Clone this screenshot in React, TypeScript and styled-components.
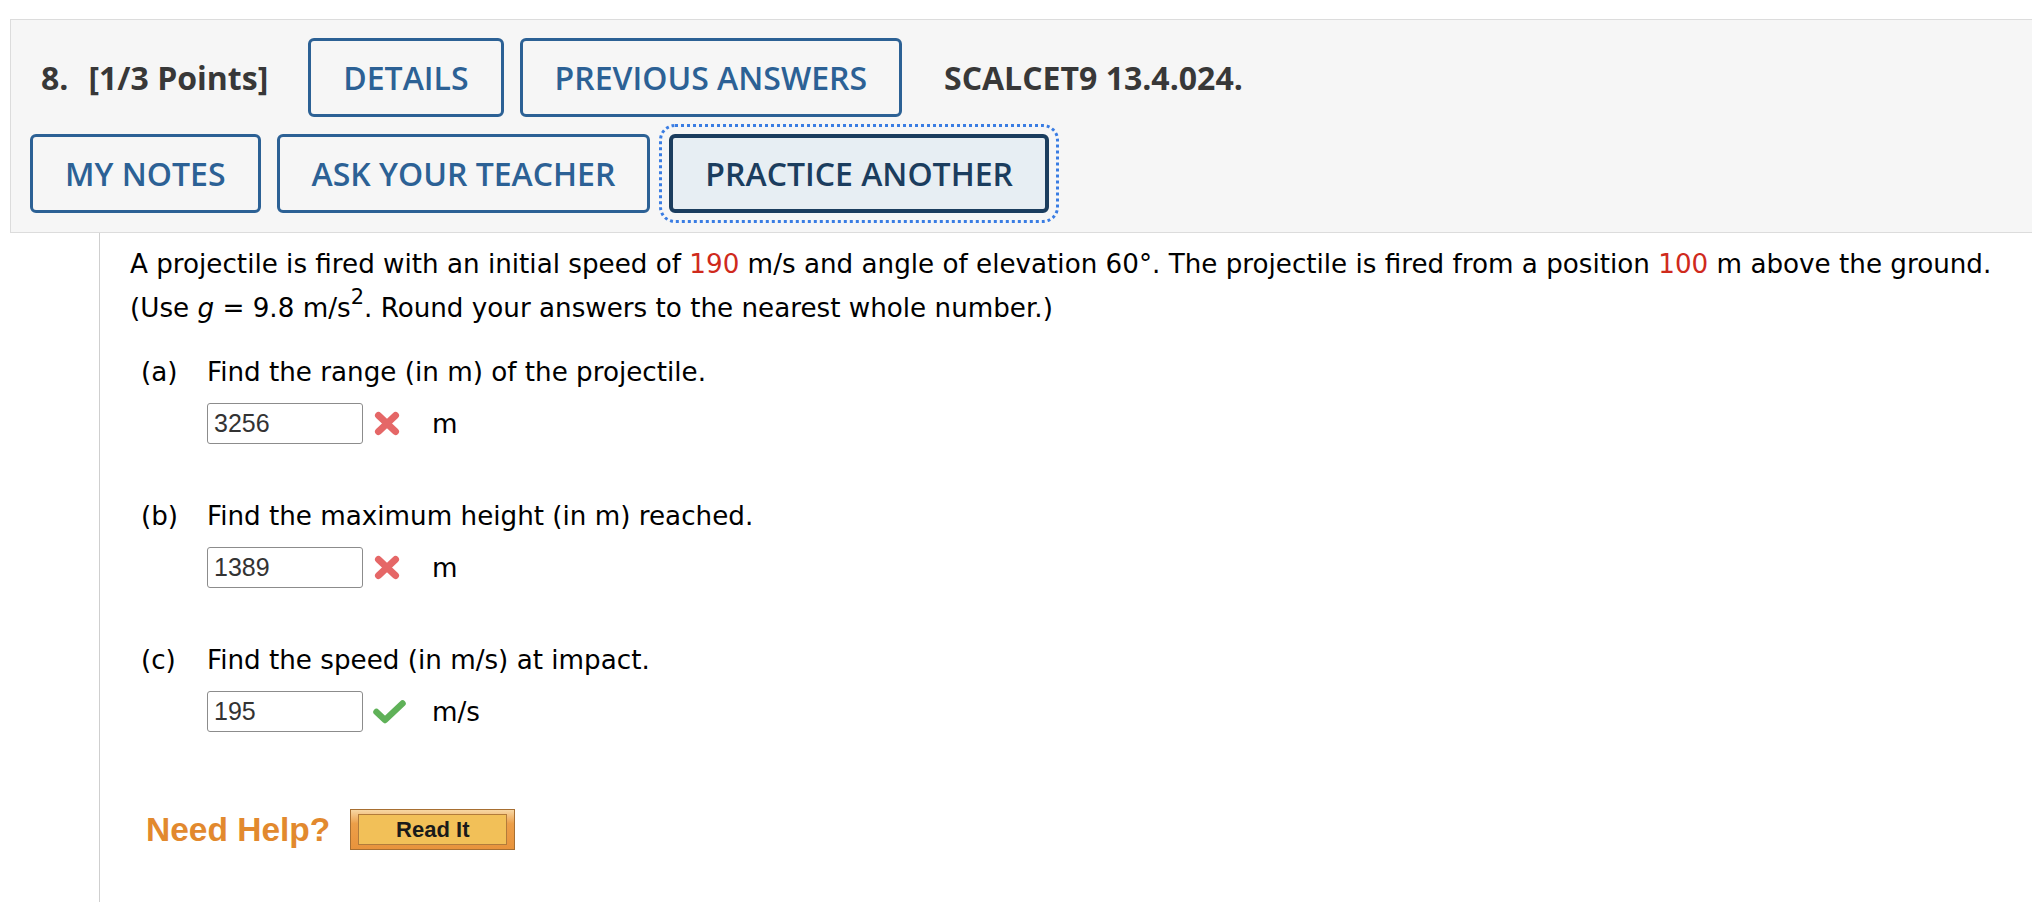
import React from "react";
import styled, { createGlobalStyle, css } from "styled-components";

const GlobalStyle = createGlobalStyle`
  html, body {
    margin: 0;
    padding: 0;
    background: #ffffff;
    overflow: hidden;
  }
  body {
    font-family: "DejaVu Sans", Verdana, sans-serif;
    color: #000;
  }
`;

const Page = styled.div`
  padding: 19px 0 0 10px;
  min-height: 883px;
  display: flex;
  flex-direction: column;
`;

const HeaderPanel = styled.div`
  background: #f6f6f6;
  border: 1px solid #dcdcdc;
  border-right: none;
  padding: 18px 0 19px 19px;
  display: flex;
  flex-direction: column;
  gap: 17px;
`;

const ButtonRow = styled.div`
  display: flex;
  align-items: center;
  gap: 16px;
`;

const QuestionTitle = styled.div`
  font-family: "Open Sans", sans-serif;
  font-weight: 700;
  font-size: 32px;
  color: #383838;
  margin-left: 11px;
  margin-right: 24px;
  display: flex;
  gap: 20px;
`;

const RefCode = styled.div`
  font-family: "Open Sans", sans-serif;
  font-weight: 700;
  font-size: 32px;
  color: #383838;
  margin-left: 26px;
`;

const ActionButton = styled.button<{ $focused?: boolean }>`
  box-sizing: border-box;
  height: 79px;
  padding: 0 32px;
  font-family: "Open Sans", sans-serif;
  font-weight: 600;
  font-size: 32px;
  color: #2c6195;
  background: #f6f6f6;
  border: 3px solid #2c6195;
  border-radius: 6px;
  cursor: pointer;
  white-space: nowrap;
  ${(p) =>
    p.$focused &&
    css`
      margin-left: 3px;
      color: #1b3d5e;
      background: #e7eef3;
      border: 4px solid #1b3d5e;
      outline: 3px dotted #3a7de3;
      outline-offset: 7px;
    `}
`;

const QuestionBody = styled.div`
  flex: 1;
  margin-left: 89px;
  border-left: 1px solid #cfcfcf;
  padding: 9px 0 0 30px;
`;

const Prompt = styled.p`
  margin: 0;
  font-size: 26.2px;
  line-height: 44px;
  color: #000;
`;

const Given = styled.span`
  color: #cf2a1c;
`;

const Sup = styled.sup`
  font-size: 0.8em;
  line-height: 0;
  vertical-align: 0.62em;
`;

const Part = styled.div`
  display: flex;
  margin: 27px 0 0 11px;
  & + & {
    margin-top: 57px;
  }
`;

const PartLabel = styled.div`
  width: 66px;
  font-size: 26.2px;
  line-height: 31px;
`;

const PartContent = styled.div`
  display: flex;
  flex-direction: column;
  gap: 15px;
`;

const PartText = styled.div`
  font-size: 26.2px;
  line-height: 31px;
`;

const AnswerRow = styled.div`
  display: flex;
  align-items: center;
`;

const AnswerInput = styled.input`
  box-sizing: border-box;
  width: 156px;
  height: 41px;
  padding: 0 6px;
  border: 1.5px solid #8c8c8c;
  border-radius: 3px;
  background: #fff;
  font-family: "Liberation Sans", Arial, sans-serif;
  font-size: 25px;
  color: #333;
`;

const MarkBox = styled.div`
  width: 34px;
  margin-left: 10px;
  display: flex;
  align-items: center;
  justify-content: flex-start;
`;

const Unit = styled.span`
  margin-left: 25px;
  font-size: 26.2px;
`;

const HelpRow = styled.div`
  display: flex;
  align-items: center;
  gap: 20px;
  margin: 77px 0 0 16px;
`;

const NeedHelp = styled.span`
  font-family: "Liberation Sans", Arial, sans-serif;
  font-weight: 700;
  font-size: 33.5px;
  color: #e2892e;
`;

const ReadItButton = styled.button`
  box-sizing: border-box;
  width: 165px;
  height: 41px;
  padding: 4px 7px;
  border: 1px solid #a76f32;
  background: linear-gradient(#f7d7a4 0%, #ec9f49 35%, #e8933c 100%);
  cursor: pointer;
  display: flex;
`;

const ReadItFace = styled.span`
  flex: 1;
  display: flex;
  align-items: center;
  justify-content: center;
  border: 1px solid #b27b3b;
  background: #f2c058;
  font-family: "Liberation Sans", Arial, sans-serif;
  font-weight: 700;
  font-size: 22px;
  color: #1a1a1a;
`;

const WrongMark = () => (
  <svg width="28" height="27" viewBox="0 0 28 27">
    <path
      d="M5.5 5.5 L22.5 21.5 M22.5 5.5 L5.5 21.5"
      stroke="#e35a5a"
      strokeWidth="7"
      strokeLinecap="round"
      fill="none"
      opacity="0.92"
    />
  </svg>
);

const RightMark = () => (
  <svg width="33" height="25" viewBox="0 0 33 25">
    <path
      d="M3.5 13 L12 21 L29.5 4.5"
      stroke="#5fb158"
      strokeWidth="6.5"
      strokeLinecap="round"
      strokeLinejoin="round"
      fill="none"
    />
  </svg>
);

type PartData = {
  label: string;
  text: string;
  answer: string;
  unit: string;
  correct: boolean;
};

const parts: PartData[] = [
  { label: "(a)", text: "Find the range (in m) of the projectile.", answer: "3256", unit: "m", correct: false },
  { label: "(b)", text: "Find the maximum height (in m) reached.", answer: "1389", unit: "m", correct: false },
  { label: "(c)", text: "Find the speed (in m/s) at impact.", answer: "195", unit: "m/s", correct: true },
];

export default function App() {
  return (
    <>
      <GlobalStyle />
      <Page>
        <HeaderPanel>
          <ButtonRow>
            <QuestionTitle>
              <span>8.</span>
              <span>[1/3 Points]</span>
            </QuestionTitle>
            <ActionButton>DETAILS</ActionButton>
            <ActionButton>PREVIOUS ANSWERS</ActionButton>
            <RefCode>SCALCET9 13.4.024.</RefCode>
          </ButtonRow>
          <ButtonRow>
            <ActionButton>MY NOTES</ActionButton>
            <ActionButton>ASK YOUR TEACHER</ActionButton>
            <ActionButton $focused>PRACTICE ANOTHER</ActionButton>
          </ButtonRow>
        </HeaderPanel>
        <QuestionBody>
          <Prompt>
            A projectile is fired with an initial speed of <Given>190</Given> m/s and angle of elevation 60°. The
            projectile is fired from a position <Given>100</Given> m above the ground.
            <br />
            (Use <i>g</i> = 9.8 m/s<Sup>2</Sup>. Round your answers to the nearest whole number.)
          </Prompt>
          {parts.map((p) => (
            <Part key={p.label}>
              <PartLabel>{p.label}</PartLabel>
              <PartContent>
                <PartText>{p.text}</PartText>
                <AnswerRow>
                  <AnswerInput defaultValue={p.answer} readOnly />
                  <MarkBox>{p.correct ? <RightMark /> : <WrongMark />}</MarkBox>
                  <Unit>{p.unit}</Unit>
                </AnswerRow>
              </PartContent>
            </Part>
          ))}
          <HelpRow>
            <NeedHelp>Need Help?</NeedHelp>
            <ReadItButton>
              <ReadItFace>Read It</ReadItFace>
            </ReadItButton>
          </HelpRow>
        </QuestionBody>
      </Page>
    </>
  );
}
